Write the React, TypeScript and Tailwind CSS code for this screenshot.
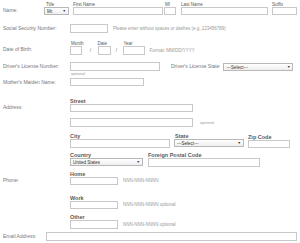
import { ReactNode } from 'react';

function Box({ w, h = 'h-[9px]' }: { w: string; h?: string }) {
  return <div className={`${w} ${h} border border-[#c8c8c8] bg-white`} />;
}

function Select({ w, text }: { w: string; text: string }) {
  return (
    <div className={`${w} h-[8px] border border-[#b8b8b8] bg-gradient-to-b from-white to-[#eee] flex items-center justify-between px-[2px] text-[4.5px] leading-[5px] text-[#333]`}>
      <span>{text}</span>
      <span className="text-[3.5px]">▼</span>
    </div>
  );
}

function Head({ children, bold }: { children: ReactNode; bold?: boolean }) {
  return bold ? (
    <div className="h-[6px] leading-[6px] text-[5.5px] font-bold text-[#5a5a5a]">{children}</div>
  ) : (
    <div className="h-[5px] leading-[5px] text-[4.5px] text-[#555]">{children}</div>
  );
}

function Label({ children, w = 'w-[70px]' }: { children: ReactNode; w?: string }) {
  return <div className={`${w} shrink-0 pl-[3px] text-[5px] leading-[5px] text-[#777]`}>{children}</div>;
}

function Hint({ children }: { children: ReactNode }) {
  return <span className="text-[4.5px] leading-[5px] text-[#999]">{children}</span>;
}

export default function App() {
  return (
    <div className="w-[300px] h-[243px] bg-white overflow-hidden text-[5px] leading-[5px]" style={{ fontFamily: '"Liberation Sans", Arial, sans-serif' }}>
      {/* name */}
      <div className="flex items-end pt-[2px]">
        <Label w="w-[44px]">
          <div className="pb-[2px]">Name:</div>
        </Label>
        <div className="flex flex-col">
          <div className="pl-[2px]"><Head>Title</Head></div>
          <Select w="w-[25px]" text="Mr." />
        </div>
        <div className="flex flex-col ml-[4px]">
          <Head>First Name</Head>
          <Box w="w-[90px]" h="h-[8px]" />
        </div>
        <div className="flex flex-col ml-[1px]">
          <div className="pl-[1px]"><Head>MI</Head></div>
          <Box w="w-[12px]" h="h-[8px]" />
        </div>
        <div className="flex flex-col ml-[5px]">
          <Head>Last Name</Head>
          <Box w="w-[87px]" h="h-[8px]" />
        </div>
        <div className="flex flex-col ml-[4px]">
          <Head>Suffix</Head>
          <Box w="w-[25px]" h="h-[8px]" />
        </div>
      </div>

      {/* ssn */}
      <div className="flex items-center mt-[9px]">
        <Label>Social Security Number:</Label>
        <Box w="w-[38px]" />
        <div className="ml-[5px]"><Hint>Please enter without spaces or dashes (e.g.,123456789)</Hint></div>
      </div>

      {/* dob */}
      <div className="flex items-end mt-[8px]">
        <Label><div className="pb-[3px]">Date of Birth:</div></Label>
        <div className="flex flex-col">
          <div className="pl-[1px]"><Head>Month</Head></div>
          <Box w="w-[12px]" />
        </div>
        <div className="w-[14px] text-center text-[5px] text-[#777] pb-[2px]">/</div>
        <div className="flex flex-col">
          <Head>Date</Head>
          <Box w="w-[13px]" />
        </div>
        <div className="w-[12px] text-center text-[5px] text-[#777] pb-[2px]">/</div>
        <div className="flex flex-col">
          <div className="pl-[1px]"><Head>Year</Head></div>
          <Box w="w-[22px]" />
        </div>
        <div className="ml-[5px] pb-[2px]"><Hint>Format: MM/DD/YYYY</Hint></div>
      </div>

      {/* drivers license */}
      <div className="flex items-start mt-[7px]">
        <Label><div className="pt-[2px]">Driver's License Number:</div></Label>
        <div className="flex flex-col">
          <Box w="w-[90px]" />
          <div className="pl-[1px] h-[6px] leading-[6px] text-[4px] text-[#999]">optional</div>
        </div>
        <div className="ml-[11px] pt-[2px] text-[5px] text-[#777]">Driver's License State</div>
        <div className="ml-[4px] pt-[1px]"><Select w="w-[70px]" text="---Select---" /></div>
      </div>

      {/* maiden name */}
      <div className="flex items-center mt-[1px]">
        <Label>Mother's Maiden Name:</Label>
        <Box w="w-[74px]" h="h-[8px]" />
      </div>

      {/* address */}
      <div className="flex items-end mt-[12px]">
        <Label><div className="pb-[2px]">Address:</div></Label>
        <div className="flex flex-col">
          <Head bold>Street</Head>
          <Box w="w-[123px]" h="h-[8px]" />
        </div>
      </div>
      <div className="flex items-end mt-[6px]">
        <Label>{''}</Label>
        <Box w="w-[123px]" />
        <div className="ml-[7px] pb-[2px] text-[4px] text-[#999]">optional</div>
      </div>

      {/* city state zip */}
      <div className="flex items-end mt-[6px]">
        <Label>{''}</Label>
        <div className="flex flex-col">
          <Head bold>City</Head>
          <Box w="w-[100px]" />
        </div>
        <div className="flex flex-col ml-[4px]">
          <div className="pl-[1px]"><Head bold>State</Head></div>
          <div className="pb-[1px]"><Select w="w-[70px]" text="---Select---" /></div>
        </div>
        <div className="flex flex-col ml-[4px]">
          <Head bold>Zip Code</Head>
          <Box w="w-[42px]" h="h-[8px]" />
        </div>
      </div>

      {/* country */}
      <div className="flex items-end mt-[4px]">
        <Label>{''}</Label>
        <div className="flex flex-col">
          <Head bold>Country</Head>
          <div className="pb-[1px]"><Select w="w-[73px]" text="United States" /></div>
        </div>
        <div className="flex flex-col ml-[5px]">
          <Head bold>Foreign Postal Code</Head>
          <Box w="w-[112px]" />
        </div>
      </div>

      {/* phone */}
      <div className="flex items-end mt-[4px]">
        <Label><div className="pb-[2px]">Phone:</div></Label>
        <div className="flex flex-col">
          <Head bold>Home</Head>
          <Box w="w-[48px]" h="h-[8px]" />
        </div>
        <div className="ml-[5px] pb-[2px] text-[4.5px] text-[#999]">NNN-NNN-NNNN</div>
      </div>
      <div className="flex items-end mt-[10px]">
        <Label>{''}</Label>
        <div className="flex flex-col">
          <Head bold>Work</Head>
          <Box w="w-[48px]" h="h-[8px]" />
        </div>
        <div className="ml-[5px] pb-[2px] text-[4.5px] text-[#999]">NNN-NNN-NNNN optional</div>
      </div>
      <div className="flex items-end mt-[5px]">
        <Label>{''}</Label>
        <div className="flex flex-col">
          <Head bold>Other</Head>
          <Box w="w-[48px]" />
        </div>
        <div className="ml-[5px] pb-[2px] text-[4.5px] text-[#999]">NNN-NNN-NNNN optional</div>
      </div>

      {/* email */}
      <div className="flex items-center mt-[3px]">
        <Label w="w-[46px]">Email Address:</Label>
        <Box w="w-[251px]" />
      </div>
    </div>
  );
}
